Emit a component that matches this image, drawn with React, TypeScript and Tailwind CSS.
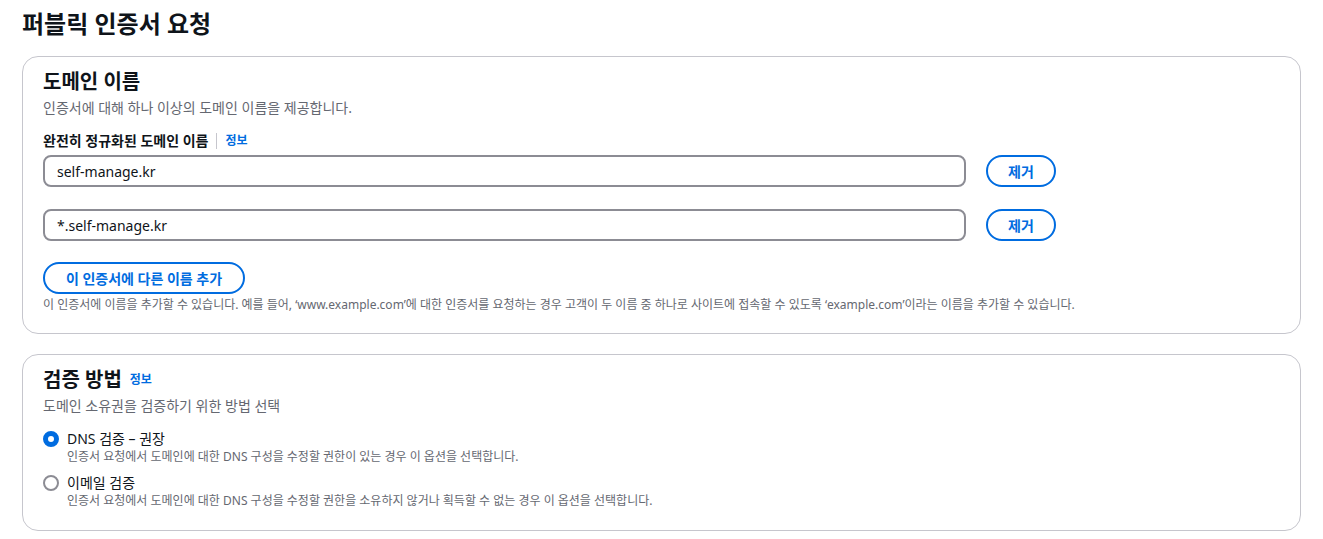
import React, { useState } from 'react';

const font = "font-['Noto_Sans','Noto_Sans_CJK_KR',sans-serif]";

function InfoLink() {
  return <a className="text-[12px] font-bold leading-4 text-[#006ce0]">정보</a>;
}

function DomainRow({ value }: { value: string }) {
  return (
    <div className="flex items-center gap-5">
      <input
        readOnly
        value={value}
        className="h-8 w-[923px] rounded-lg border-2 border-[#8c8c94] bg-white px-3 text-[14px] text-[#0f141a] outline-none"
      />
      <button className="h-8 w-[70px] rounded-full border-2 border-[#006ce0] text-[14px] font-bold text-[#006ce0]">
        제거
      </button>
    </div>
  );
}

function Radio({
  checked,
  label,
  desc,
  onClick,
}: {
  checked: boolean;
  label: string;
  desc: string;
  onClick: () => void;
}) {
  return (
    <div className="flex gap-2 cursor-pointer" onClick={onClick}>
      <div className="flex h-5 items-center">
        <span
          className={
            checked
              ? 'block h-4 w-4 rounded-full border-[5px] border-[#006ce0] bg-white'
              : 'block h-4 w-4 rounded-full border-2 border-[#8c8c94] bg-white'
          }
        />
      </div>
      <div>
        <div className="text-[14px] leading-5 text-[#0f141a]">{label}</div>
        <div className="text-[12px] leading-4 text-[#656871]">{desc}</div>
      </div>
    </div>
  );
}

export default function App() {
  const [method, setMethod] = useState<'dns' | 'email'>('dns');

  return (
    <div className={`${font} min-h-screen bg-white px-[22px] pt-2 pb-2 text-[#0f141a]`}>
      <h1 className="text-[24px] font-bold leading-8">퍼블릭 인증서 요청</h1>

      <section className="mt-4 rounded-2xl border border-[#c6c6cd] px-5 pt-3 pb-5">
        <h2 className="text-[20px] font-bold leading-[26px]">도메인 이름</h2>
        <p className="mt-[3px] text-[14px] leading-5 text-[#656871]">
          인증서에 대해 하나 이상의 도메인 이름을 제공합니다.
        </p>

        <div className="mt-[13px] flex items-center gap-2">
          <span className="text-[14px] font-bold leading-5">완전히 정규화된 도메인 이름</span>
          <span className="h-4 w-px bg-[#c6c6cd]" />
          <InfoLink />
        </div>

        <div className="mt-1 flex flex-col gap-[22px]">
          <DomainRow value="self-manage.kr" />
          <DomainRow value="*.self-manage.kr" />
        </div>

        <button className="mt-[21px] h-8 w-[202px] rounded-full border-2 border-[#006ce0] text-[14px] font-bold text-[#006ce0]">
          이 인증서에 다른 이름 추가
        </button>
        <p className="mt-[3px] text-[12px] leading-4 text-[#656871]">
          이 인증서에 이름을 추가할 수 있습니다. 예를 들어, ‘www.example.com’에 대한 인증서를 요청하는 경우 고객이 두 이름 중 하나로 사이트에 접속할 수 있도록 ‘example.com’이라는 이름을 추가할 수 있습니다.
        </p>
      </section>

      <section className="mt-5 rounded-2xl border border-[#c6c6cd] px-5 pt-3 pb-[21px]">
        <div className="flex items-center gap-2">
          <h2 className="text-[20px] font-bold leading-[26px]">검증 방법</h2>
          <InfoLink />
        </div>
        <p className="mt-[3px] text-[14px] leading-5 text-[#656871]">
          도메인 소유권을 검증하기 위한 방법 선택
        </p>

        <div className="mt-[13px] flex flex-col gap-2">
          <Radio
            checked={method === 'dns'}
            onClick={() => setMethod('dns')}
            label="DNS 검증 – 권장"
            desc="인증서 요청에서 도메인에 대한 DNS 구성을 수정할 권한이 있는 경우 이 옵션을 선택합니다."
          />
          <Radio
            checked={method === 'email'}
            onClick={() => setMethod('email')}
            label="이메일 검증"
            desc="인증서 요청에서 도메인에 대한 DNS 구성을 수정할 권한을 소유하지 않거나 획득할 수 없는 경우 이 옵션을 선택합니다."
          />
        </div>
      </section>
    </div>
  );
}
